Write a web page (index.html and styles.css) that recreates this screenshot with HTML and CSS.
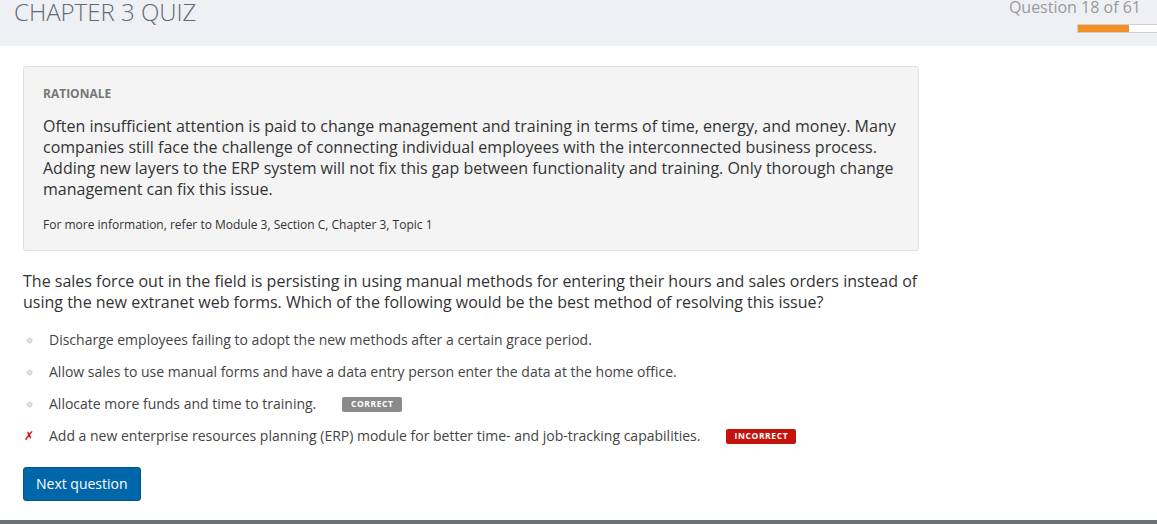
FILE: index.html
```html
<!DOCTYPE html>
<html lang="en">
<head>
<meta charset="utf-8">
<title>Chapter 3 Quiz</title>
<link rel="stylesheet" href="styles.css">
</head>
<body>
<div class="page">
  <header class="topbar">
    <h1 class="quiz-title">CHAPTER 3 QUIZ</h1>
    <div class="progress-area">
      <div class="progress-label">Question 18 of 61</div>
      <div class="progress-track"><div class="progress-fill" style="width:51px"></div></div>
    </div>
  </header>

  <main class="content">
    <section class="rationale">
      <h2 class="rationale-title">RATIONALE</h2>
      <p class="rationale-text">Often insufficient attention is paid to change management and training in terms of time, energy, and money. Many companies still face the challenge of connecting individual employees with the interconnected business process. Adding new layers to the ERP system will not fix this gap between functionality and training. Only thorough change management can fix this issue.</p>
      <p class="rationale-ref">For more information, refer to Module 3, Section C, Chapter 3, Topic 1</p>
    </section>

    <p class="question">The sales force out in the field is persisting in using manual methods for entering their hours and sales orders instead of using the new extranet web forms. Which of the following would be the best method of resolving this issue?</p>

    <ul class="options">
      <li class="option">
        <span class="marker"><svg class="dot" width="7" height="7" viewBox="0 0 7 7"><path d="M3.5 0 L7 3.5 L3.5 7 L0 3.5 Z" fill="#d4d4d4"/><path d="M3.5 2 L5 3.5 L3.5 5 L2 3.5 Z" fill="#ededed"/></svg></span>
        <span class="option-text">Discharge employees failing to adopt the new methods after a certain grace period.</span>
      </li>
      <li class="option">
        <span class="marker"><svg class="dot" width="7" height="7" viewBox="0 0 7 7"><path d="M3.5 0 L7 3.5 L3.5 7 L0 3.5 Z" fill="#d4d4d4"/><path d="M3.5 2 L5 3.5 L3.5 5 L2 3.5 Z" fill="#ededed"/></svg></span>
        <span class="option-text">Allow sales to use manual forms and have a data entry person enter the data at the home office.</span>
      </li>
      <li class="option">
        <span class="marker"><svg class="dot" width="7" height="7" viewBox="0 0 7 7"><path d="M3.5 0 L7 3.5 L3.5 7 L0 3.5 Z" fill="#d4d4d4"/><path d="M3.5 2 L5 3.5 L3.5 5 L2 3.5 Z" fill="#ededed"/></svg></span>
        <span class="option-text">Allocate more funds and time to training.</span>
        <span class="badge badge-correct">CORRECT</span>
      </li>
      <li class="option">
        <span class="marker marker-wrong">✗</span>
        <span class="option-text">Add a new enterprise resources planning (ERP) module for better time- and job-tracking capabilities.</span>
        <span class="badge badge-incorrect">INCORRECT</span>
      </li>
    </ul>

    <div class="actions">
      <button class="btn-next" type="button">Next question</button>
    </div>
  </main>

  <footer class="bottom-rule"></footer>
</div>
</body>
</html>
```

FILE: styles.css
```css
* { box-sizing: border-box; }

html, body {
  margin: 0;
  padding: 0;
  height: 100%;
  overflow: hidden;
  background: #ffffff;
  font-family: "Open Sans", "Liberation Sans", sans-serif;
  color: #333333;
}

.page {
  min-height: 100vh;
  display: flex;
  flex-direction: column;
}

.topbar {
  height: 46px;
  background: #eff0f4;
  display: flex;
  justify-content: space-between;
  align-items: flex-start;
  flex: 0 0 auto;
}

.quiz-title {
  margin: 0 0 0 14px;
  font-size: 24px;
  line-height: 24px;
  font-weight: 300;
  color: #5e6a75;
  letter-spacing: 0;
}

.progress-area {
  display: flex;
  flex-direction: column;
  align-items: flex-end;
  margin-right: -30px;
}

.progress-label {
  margin-top: -1px;
  margin-right: 46px;
  font-size: 16px;
  line-height: 16px;
  color: #9a9a9a;
}

.progress-track {
  margin-top: 9px;
  width: 110px;
  height: 9px;
  border: 1px solid #cfcfcf;
  background: #ffffff;
}

.progress-fill {
  height: 7px;
  background: #f39021;
}

.content {
  flex: 1 1 auto;
  padding: 20px 0 0 23px;
}

.rationale {
  width: 896px;
  height: 185px;
  background: #f4f4f4;
  border: 1px solid #e1e1e1;
  border-radius: 3px;
  padding: 19px 19px 0 19px;
}

.rationale-title {
  margin: 0;
  font-size: 12px;
  line-height: 16px;
  font-weight: 700;
  color: #777777;
}

.rationale-text {
  margin: 14px 0 0 0;
  font-size: 16px;
  line-height: 21px;
  color: #333333;
}

.rationale-ref {
  margin: 17px 0 0 0;
  font-size: 12px;
  line-height: 16px;
  color: #333333;
}

.question {
  margin: 20px 0 0 0;
  width: 900px;
  font-size: 16px;
  line-height: 21px;
  color: #333333;
}

.options {
  list-style: none;
  margin: 17px 0 0 0;
  padding: 0;
  display: flex;
  flex-direction: column;
  gap: 12px;
}

.option {
  display: flex;
  align-items: center;
  font-size: 14px;
  line-height: 20px;
  color: #444444;
}

.marker {
  width: 26px;
  flex: 0 0 26px;
  display: flex;
  align-items: center;
  padding-left: 3px;
}

.marker-wrong {
  padding-left: 1px;
  color: #e00000;
  font-family: "DejaVu Sans", sans-serif;
  font-size: 12px;
  font-weight: 700;
}

.badge {
  margin-left: 26px;
  height: 15px;
  display: inline-flex;
  align-items: center;
  justify-content: center;
  font-size: 8.5px;
  font-weight: 700;
  letter-spacing: 0.6px;
  color: #ffffff;
  border-radius: 2px;
}

.badge-correct {
  width: 60px;
  background: #8a8a8a;
}

.badge-incorrect {
  width: 70px;
  background: #c4120c;
}

.actions {
  margin-top: 21px;
}

.btn-next {
  height: 34px;
  padding: 0 12px;
  background: #0066aa;
  border: 1px solid #00558e;
  border-radius: 3px;
  color: #ffffff;
  font-family: "Open Sans", "Liberation Sans", sans-serif;
  font-size: 14px;
  font-weight: 500;
  line-height: 20px;
}

.bottom-rule {
  flex: 0 0 4px;
  height: 4px;
  background: #6b7277;
}
```
